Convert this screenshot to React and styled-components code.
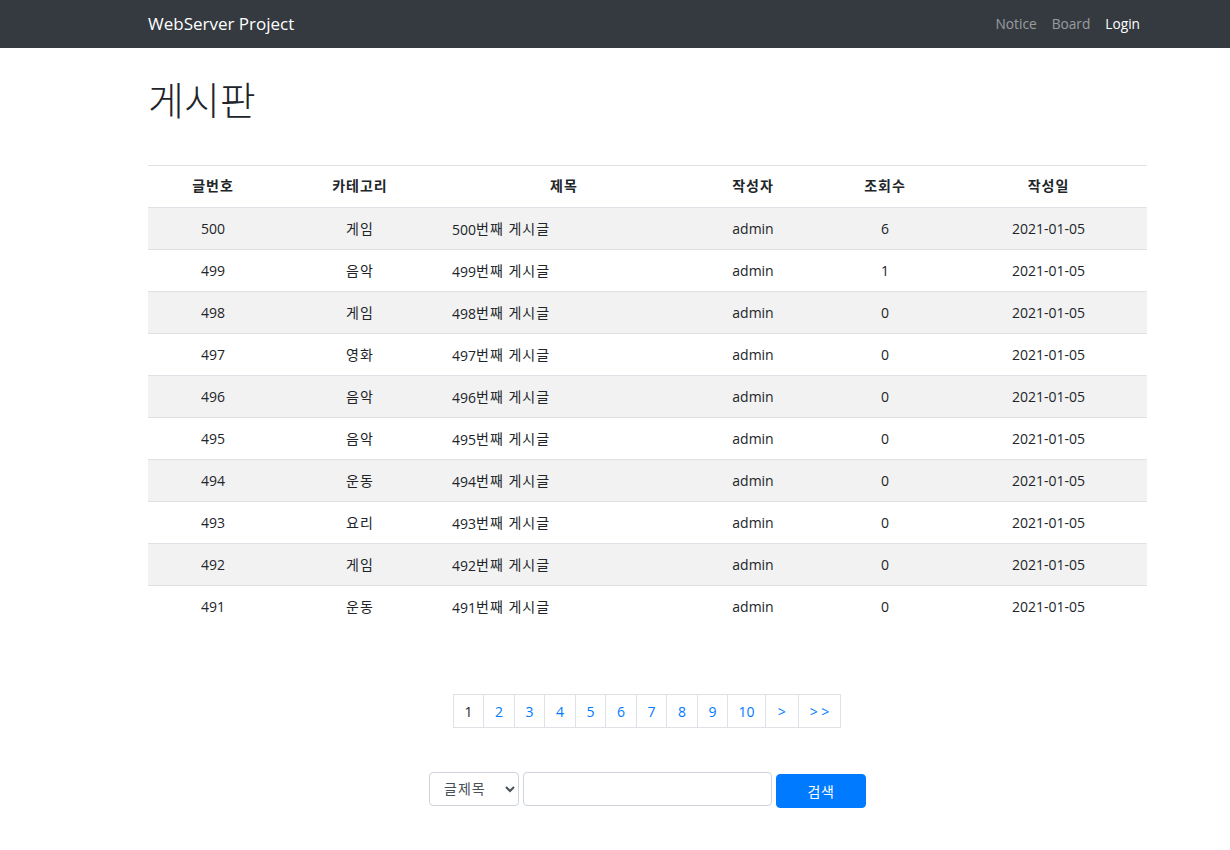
import styled, { createGlobalStyle } from "styled-components";

const fontStack = `"Open Sans", "Noto Sans CJK KR", sans-serif`;

const GlobalStyle = createGlobalStyle`
  html, body {
    margin: 0;
    background: #fff;
  }
  body {
    font-family: ${fontStack};
    font-size: 14px;
    color: #212529;
  }
  * {
    box-sizing: border-box;
  }
`;

const Navbar = styled.nav`
  height: 48px;
  background: #343a40;
  display: flex;
  align-items: center;
  justify-content: space-between;
  padding: 0 83px 2px 148px;
`;

const Brand = styled.a`
  color: #fff;
  font-size: 17px;
  text-decoration: none;
`;

const NavLinks = styled.div`
  display: flex;
  gap: 15px;
  padding-right: 7px;
`;

const NavLink = styled.a`
  color: ${(p) => (p.$active ? "#fff" : "rgba(255, 255, 255, 0.5)")};
  font-size: 13.7px;
  text-decoration: none;
`;

const Main = styled.main`
  padding: 0 83px 0 148px;
`;

const Title = styled.h1`
  margin: 0;
  padding-top: 24px;
  height: 117px;
  font-size: 39px;
  font-weight: 300;
  line-height: 56px;
`;

const BoardTable = styled.table`
  width: 999px;
  border-collapse: collapse;
  table-layout: fixed;
  border-top: 1px solid #dee2e6;
`;

const HeadCell = styled.th`
  width: ${(p) => p.$width}px;
  height: 42px;
  padding: 0 0 3px;
  font-size: 14px;
  font-weight: 700;
  letter-spacing: 1px;
  text-align: center;
  border-bottom: 1px solid #dee2e6;
`;

const Row = styled.tr`
  background: ${(p) => (p.$striped ? "#f2f2f2" : "#fff")};
  border-bottom: ${(p) => (p.$last ? "none" : "1px solid #dee2e6")};
`;

const Cell = styled.td`
  height: 42px;
  padding: ${(p) => (p.$left ? "0 0 0 10px" : "0")};
  font-size: 14px;
  text-align: ${(p) => (p.$left ? "left" : "center")};
`;

// hangul runs a little wider and higher in the reference
const Hangul = styled.span`
  letter-spacing: 1px;
  vertical-align: 1px;
`;

const Pagination = styled.ul`
  list-style: none;
  margin: 66px 0 0;
  padding: 0;
  display: flex;
  justify-content: center;
`;

const PageItem = styled.li`
  width: ${(p) => p.$width}px;
  height: 34px;
  margin-left: -1px;
  padding-top: 2px;
  display: flex;
  align-items: center;
  justify-content: center;
  border: 1px solid #dee2e6;
  background: #fff;
  font-size: 14px;
  color: ${(p) => (p.$current ? "#212529" : "#007bff")};
`;

const SearchForm = styled.form`
  margin-top: 44px;
  display: flex;
  justify-content: center;
  align-items: flex-start;
  gap: 4px;
`;

const Select = styled.select`
  width: 90px;
  height: 34px;
  padding: 0 0 0 10px;
  font-family: ${fontStack};
  font-size: 14px;
  letter-spacing: 1px;
  color: #495057;
  background: #fff;
  border: 1px solid #ced4da;
  border-radius: 4px;
`;

const Input = styled.input`
  width: 249px;
  height: 34px;
  padding: 0 8px;
  background: #fff;
  border: 1px solid #ced4da;
  border-radius: 4px;
`;

const SearchButton = styled.button`
  width: 90px;
  height: 34px;
  margin-top: 2px;
  font-family: ${fontStack};
  font-size: 14px;
  letter-spacing: 0.5px;
  color: #fff;
  background: #007bff;
  border: 1px solid #007bff;
  border-radius: 4px;
`;

const columns = [
  { label: "글번호", width: 130 },
  { label: "카테고리", width: 164 },
  { label: "제목", width: 244 },
  { label: "작성자", width: 134 },
  { label: "조회수", width: 130 },
  { label: "작성일", width: 197 },
];

const posts = [
  { id: 500, category: "게임", views: 6 },
  { id: 499, category: "음악", views: 1 },
  { id: 498, category: "게임", views: 0 },
  { id: 497, category: "영화", views: 0 },
  { id: 496, category: "음악", views: 0 },
  { id: 495, category: "음악", views: 0 },
  { id: 494, category: "운동", views: 0 },
  { id: 493, category: "요리", views: 0 },
  { id: 492, category: "게임", views: 0 },
  { id: 491, category: "운동", views: 0 },
];

const pages = [
  { label: "1", width: 31.5, current: true },
  { label: "2", width: 31.5 },
  { label: "3", width: 31.5 },
  { label: "4", width: 31.5 },
  { label: "5", width: 31.5 },
  { label: "6", width: 31.5 },
  { label: "7", width: 31.5 },
  { label: "8", width: 31.5 },
  { label: "9", width: 31.5 },
  { label: "10", width: 38.5 },
  { label: ">", width: 34 },
  { label: "> >", width: 43.5 },
];

const App = () => {
  return (
    <>
      <GlobalStyle />
      <Navbar>
        <Brand href="#">WebServer Project</Brand>
        <NavLinks>
          <NavLink href="#">Notice</NavLink>
          <NavLink href="#">Board</NavLink>
          <NavLink href="#" $active>
            Login
          </NavLink>
        </NavLinks>
      </Navbar>
      <Main>
        <Title>게시판</Title>
        <BoardTable>
          <thead>
            <tr>
              {columns.map((col) => (
                <HeadCell key={col.label} $width={col.width}>
                  {col.label}
                </HeadCell>
              ))}
            </tr>
          </thead>
          <tbody>
            {posts.map((post, index) => (
              <Row
                key={post.id}
                $striped={index % 2 === 0}
                $last={index === posts.length - 1}
              >
                <Cell>{post.id}</Cell>
                <Cell>
                  <Hangul>{post.category}</Hangul>
                </Cell>
                <Cell $left>
                  {post.id}
                  <Hangul>번째 게시글</Hangul>
                </Cell>
                <Cell>admin</Cell>
                <Cell>{post.views}</Cell>
                <Cell>2021-01-05</Cell>
              </Row>
            ))}
          </tbody>
        </BoardTable>
        <Pagination>
          {pages.map((page) => (
            <PageItem
              key={page.label}
              $width={page.width}
              $current={page.current}
            >
              {page.label}
            </PageItem>
          ))}
        </Pagination>
        <SearchForm>
          <Select defaultValue="title">
            <option value="title">글제목</option>
          </Select>
          <Input />
          <SearchButton type="button">검색</SearchButton>
        </SearchForm>
      </Main>
    </>
  );
};

export default App;
